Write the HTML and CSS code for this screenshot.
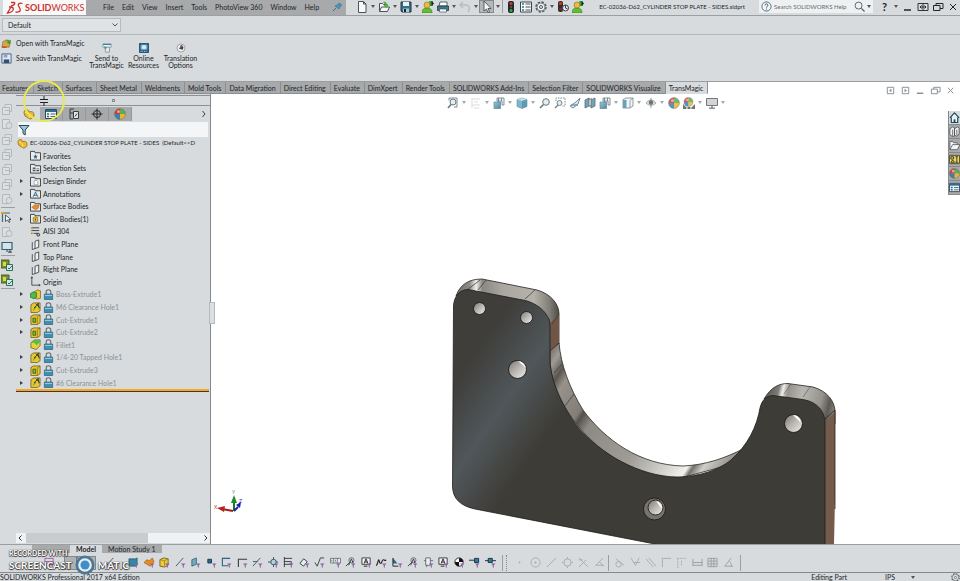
FILE: index.html
```html
<!DOCTYPE html>
<html lang="en">
<head>
<meta charset="utf-8">
<title>SOLIDWORKS</title>
<link rel="stylesheet" href="styles.css">
</head>
<body>
<svg class="defs" aria-hidden="true">
  <defs>
    <linearGradient id="g-blue" x1="0" y1="0" x2="1" y2="1"><stop offset="0" stop-color="#8cc3da"/><stop offset="1" stop-color="#2f6f8f"/></linearGradient>
    <symbol id="caret" viewBox="0 0 4 3"><path d="M0 0h4L2 3z" fill="#555"/></symbol>
    <symbol id="pin" viewBox="0 0 12 12"><path d="M2 10l3-3" stroke="#3d6f8f"/><path d="M4 5l4 3 1-2 2-2-3-2-2 2z" fill="#4a93bd" stroke="#2f6685" stroke-width=".5"/></symbol>
    <symbol id="new" viewBox="0 0 12 12"><path d="M2.5.5h5l2.500 2.500v8.500h-7.500zM7.500.5v2.500h2.500" fill="#f6f8f9" stroke="#4b5154"/></symbol>
    <symbol id="open" viewBox="0 0 12 12"><path d="M1.500 10.500v-8h3l1 1h4M1.500 10.500l2-4.500h8l-2 4.500z" fill="#f4f6f7" stroke="#4b5154"/><path d="M5 1c3-1 4 1 4 3h1.500L8 7 5.500 4H7c0-1-1-2-2-3z" fill="#4fae36"/></symbol>
    <symbol id="save" viewBox="0 0 12 12"><path d="M1 1h10v10H2l-1-1z" fill="#33718f" stroke="#24343d"/><path d="M3 1h6v4H3z" fill="#e8f1f5"/><path d="M3 7.500h6V11H3z" fill="#b6c4cb"/><path d="M4 8h2v3H4z" fill="#222"/></symbol>
    <symbol id="person" viewBox="0 0 12 12"><path d="M0 12c0-4 2-5 5-5s5 1 5 5z" fill="#5fbf2f" stroke="#377a1d" stroke-width=".6"/><circle cx="5" cy="4" r="3" fill="#f0b83d" stroke="#8a6a25" stroke-width=".6"/><path d="M7 0h4v5H8z" fill="#3aa134"/><path d="M9.500 0L12 2.500 9.500 5z" fill="#17202a"/></symbol>
    <symbol id="print" viewBox="0 0 12 12"><path d="M3 1h7v4H2z" fill="#fff" stroke="#36454e" stroke-width=".8"/><path d="M.5 5h11v4.500H.5z" fill="#39788f" stroke="#22353f" stroke-width=".8"/><path d="M2.500 8h7v3h-7z" fill="#f5f7f8" stroke="#36454e" stroke-width=".6"/></symbol>
    <symbol id="undo" viewBox="0 0 12 12"><path d="M4 1L1 4l3 3M1 4h6c4 0 4 5 2 7" fill="none" stroke="#b9bdc0" stroke-width="1.500"/></symbol>
    <symbol id="cursor" viewBox="0 0 12 12"><path d="M3 0v10l2.500-2L7 11.500l1.500-.8L7 7.500h3z" fill="#f8f8f8" stroke="#3a3d40" stroke-width=".8"/></symbol>
    <symbol id="traffic" viewBox="0 0 12 12"><rect x="3" y="0" width="6" height="12" rx="2" fill="#23282b"/><circle cx="6" cy="2.500" r="1.600" fill="#d7352a"/><circle cx="6" cy="6" r="1.200" fill="#54524a"/><circle cx="6" cy="9.500" r="1.500" fill="#3aa93f"/></symbol>
    <symbol id="list" viewBox="0 0 12 12"><path d="M.5 1h11v10H.5z" fill="#f7f9fa" stroke="#3c474d"/><path d="M2 3h2M2 6h2M2 9h2" stroke="#2f7090" stroke-width="1.500"/><path d="M5.500 3h5M5.500 6h5M5.500 9h5" stroke="#4a5155"/></symbol>
    <symbol id="gear" viewBox="0 0 12 12"><circle cx="6" cy="6" r="5" fill="none" stroke="#50575b" stroke-width="1.400" stroke-dasharray="2.400 1.500"/><circle cx="6" cy="6" r="4" fill="#eef0f1" stroke="#50575b" stroke-width=".7"/><circle cx="6" cy="6" r="1.500" fill="none" stroke="#50575b"/></symbol>
    <symbol id="traffic2" viewBox="0 0 12 12"><rect x="1" y="0" width="5" height="11" rx="2" fill="#332a2a"/><circle cx="3.500" cy="2.500" r="1.600" fill="#d7352a"/><circle cx="3.500" cy="8" r="1.300" fill="#842f2b"/><circle cx="8.500" cy="7" r="3" fill="#e5e8ea" stroke="#3c4347"/><path d="M8.500 4v3l2 1" stroke="#3c4347" fill="none"/></symbol>
    <symbol id="zoom" viewBox="0 0 12 12"><circle cx="7" cy="5" r="3.300" fill="#e1ebf0" stroke="#50626b"/><path d="M4.500 7.500L1 11" stroke="#50626b" stroke-width="1.600"/></symbol>
    <symbol id="zoomfit" viewBox="0 0 12 12"><path d="M2 3.500V1h8v9H7" fill="none" stroke="#687780"/><circle cx="6" cy="5" r="3" fill="#dfe9ee" stroke="#50626b"/><path d="M4 7.500L1 11" stroke="#50626b" stroke-width="1.600"/></symbol>
    <symbol id="zoomarea" viewBox="0 0 12 12"><path d="M2 4V1h9v8H8" fill="none" stroke="#687780" stroke-dasharray="1.500 1"/><circle cx="5.500" cy="6" r="2.500" fill="#dfe9ee" stroke="#61727b"/><path d="M4 8L1 11" stroke="#61727b" stroke-width="1.500"/></symbol>
    <symbol id="faint" viewBox="0 0 12 12"><path d="M2 1v10M2 2h8M4 5h4M2 8h8M4 11h5" stroke="#d3d6d8" fill="none"/></symbol>
    <symbol id="views" viewBox="0 0 12 12"><path d="M4 1h7v7H9V4H4z" fill="#eaf0f3" stroke="#51646e" stroke-width=".8"/><path d="M1 5h6.500v6.500H1z" fill="url(#g-blue)" stroke="#3d5f6f" stroke-width=".6"/><path d="M5.500 1v4M8.500 1v3" stroke="#51646e" stroke-width=".8"/></symbol>
    <symbol id="cube" viewBox="0 0 12 12"><path d="M6 1l5 1.500v7L6 11.500l-5-2v-7z" fill="#6ba8c2" stroke="#4c7789" stroke-width=".6"/><path d="M1 2.500L6 4l5-1.500L6 1z" fill="#b7dbe8"/><path d="M6 4v7.500l5-2v-7z" fill="#4588a5"/></symbol>
    <symbol id="section" viewBox="0 0 12 12"><path d="M1 3l4-2v8l-4 2zM7 3l4-2v8l-4 2z" fill="#5d93aa" stroke="#41525b" stroke-width=".8"/><path d="M5 2h3M5 9h2" stroke="#41525b"/></symbol>
    <symbol id="wand" viewBox="0 0 12 12"><path d="M1 9l6-4 4-4-2 6-5 4z" fill="#dce7ec" stroke="#546a75" stroke-width=".9"/><path d="M2 8h7" stroke="#4b8baa" stroke-width="1.500"/></symbol>
    <symbol id="hide" viewBox="0 0 12 12"><path d="M1 2.500L4 1h7v8l-3 2H1z" fill="#eef4f6" stroke="#5a717c" stroke-width=".8"/><path d="M1 3h3.500v8H1z" fill="#4f91ad"/><path d="M8 3.500V11M8 3.500L11 1" stroke="#5a717c" stroke-width=".7"/></symbol>
    <symbol id="eye" viewBox="0 0 12 12"><path d="M1 6c3-4 7-4 10 0-3 3-7 3-10 0z" fill="#d8dcdf" stroke="#777d80" stroke-width=".7"/><circle cx="6" cy="5.500" r="2.200" fill="#4f5558"/><path d="M6 1v10" stroke="#656b6f" stroke-width=".8"/></symbol>
    <symbol id="ball" viewBox="0 0 12 12"><path d="M6 6V.5A5.500 5.500 0 0 1 11.500 6z" fill="#58b14c"/><path d="M6 6h5.500A5.500 5.500 0 0 1 6 11.500z" fill="#e8b72b"/><path d="M6 6v5.500A5.500 5.500 0 0 1 .5 6z" fill="#3d7fb4"/><path d="M6 6H.5A5.500 5.500 0 0 1 6 .5z" fill="#cf3c34"/><circle cx="6" cy="6" r="5.400" fill="none" stroke="#666" stroke-width=".5"/><circle cx="4.500" cy="3.500" r="1.500" fill="#fff" opacity=".5"/></symbol>
    <symbol id="scene" viewBox="0 0 12 12"><use href="#ball" width="11" height="10"/><path d="M0 12V7l3 3h6l3-3v5z" fill="#555b58"/><path d="M3 11h2M7 11h2" stroke="#fff"/></symbol>
    <symbol id="monitor" viewBox="0 0 12 12"><path d="M.5 1.500h11v7H.5z" fill="#c9ced1" stroke="#5a6064"/><path d="M6 8.500V11M3 11.200h6" stroke="#5a6064" stroke-width="1.200"/></symbol>
    <symbol id="min" viewBox="0 0 12 12"><path d="M2 9h7" stroke="currentColor" stroke-width="1.500"/></symbol>
    <symbol id="max" viewBox="0 0 12 12"><path d="M1 2.500h10v7H1zM6 2v8M3 6h6M4.500 4.500L3 6l1.500 1.500M7.500 4.500L9 6 7.500 7.500" fill="none" stroke="currentColor" stroke-width=".9"/></symbol>
    <symbol id="restore" viewBox="0 0 12 12"><path d="M4 4.500v-2h7v5H8M1.500 4.500H8v5H1.500z" fill="none" stroke="currentColor"/></symbol>
    <symbol id="close" viewBox="0 0 12 12"><path d="M3 3l6 6M9 3L3 9" stroke="currentColor"/></symbol>
    <symbol id="paneL" viewBox="0 0 12 12"><path d="M2.500 2.500h7v7h-7z" fill="none" stroke="currentColor"/><path d="M7 4v4L4.500 6z" fill="currentColor"/></symbol>
    <symbol id="paneR" viewBox="0 0 12 12"><path d="M2.500 2.500h7v7h-7z" fill="none" stroke="currentColor"/><path d="M5 4v4l2.500-2z" fill="currentColor"/></symbol>
    <symbol id="part" viewBox="0 0 12 12"><path d="M1 5c0-3 2-4 4-3l1 2c3-1 5 0 5 3 0 2-2 4-4 4L2 8z" fill="#eeb92c" stroke="#8d6716" stroke-width=".8"/><path d="M2 4l3 2M6 6v4" stroke="#fbe48d"/></symbol>
    <symbol id="prop" viewBox="0 0 12 12"><path d="M.5 1.500h11v9H.5z" fill="#eef3f6" stroke="#2a4b5c"/><path d="M1 3h10" stroke="#2d6f93" stroke-width="2"/><path d="M2 6h2M2 8.500h2" stroke="#2d6f93" stroke-width="1.500"/><path d="M5.500 6h5M5.500 8.500h5" stroke="#56646b"/></symbol>
    <symbol id="config" viewBox="0 0 12 12"><path d="M2 1h4M2 1v10h3M2 5h3" fill="none" stroke="#373d40"/><path d="M5.500 3.500h5v7h-5z" fill="#e5e8ea" stroke="#373d40"/><path d="M7 8.500l2-3" stroke="#373d40"/></symbol>
    <symbol id="target" viewBox="0 0 12 12"><circle cx="6" cy="6" r="3.500" fill="none" stroke="#24282a"/><path d="M6 .5v11M.5 6h11" stroke="#24282a"/></symbol>
    <symbol id="funnel" viewBox="0 0 12 12"><path d="M1 1.500h10L7.200 6v5L5 9.500V6z" fill="#9cc5d6" stroke="#294a59"/></symbol>
    <symbol id="folder" viewBox="0 0 12 12"><path d="M.5 2V11h11V3H5.500L5 1.500H.5z" fill="#e9ecee" stroke="#34393c"/></symbol>
    <symbol id="f-star" viewBox="0 0 12 12"><use href="#folder"/><path d="M6 4.500l.8 1.700 1.700.2-1.300 1.300.4 1.800L6 8.600l-1.600.9.4-1.800-1.300-1.300 1.700-.2z" fill="#2f6782"/></symbol>
    <symbol id="f-sel" viewBox="0 0 12 12"><use href="#folder"/><path d="M3 5h3v4H3zM7 6h3v3H7z" fill="#4a5053"/><path d="M3 7h7" stroke="#ddd"/></symbol>
    <symbol id="f-bind" viewBox="0 0 12 12"><use href="#folder"/><path d="M4.500 5h3l1 1v3.500h-4z" fill="#fff" stroke="#777" stroke-width=".6"/></symbol>
    <symbol id="f-ann" viewBox="0 0 12 12"><use href="#folder"/><path d="M3.500 9.500L6 4.500l2.500 5M4.500 8h3" fill="none" stroke="#23617d"/></symbol>
    <symbol id="f-surf" viewBox="0 0 12 12"><use href="#folder"/><path d="M2 7l3-3 2 1 3-1-1 4-3 1.500z" fill="#ec8a24" stroke="#96540f" stroke-width=".5"/></symbol>
    <symbol id="f-solid" viewBox="0 0 12 12"><use href="#folder"/><path d="M3.500 5l2.500-1 2.500 1v4L6 10 3.500 9z" fill="#e5bd2b" stroke="#675214" stroke-width=".6"/><path d="M6 6v2" stroke="#5c4a10"/></symbol>
    <symbol id="mat" viewBox="0 0 12 12"><path d="M1 2h9M1 5h9M4 8h5" stroke="#34393c" fill="none"/><path d="M1 2l2-1M1 5l2-1" stroke="#d5aa22"/><circle cx="9" cy="9.500" r="1.500" fill="#cfd4d6" stroke="#222"/><path d="M1 8h2" stroke="#a88119" stroke-width="1.500"/></symbol>
    <symbol id="plane" viewBox="0 0 12 12"><path d="M2.500 3.500v8l7-2.500V1l-4 1.500v8" fill="#edf0f1" stroke="#34393c" stroke-width=".9"/></symbol>
    <symbol id="origin" viewBox="0 0 12 12"><path d="M2 1v9h9M1 2.500L2 .8l1 1.700M9.500 9l1.700 1-1.700 1" fill="none" stroke="#34393c" stroke-width=".9"/></symbol>
    <symbol id="boss" viewBox="0 0 12 12"><path d="M5 3l3-2 3.500 1v8L8 11 5 10z" fill="#ecc633" stroke="#6b5510" stroke-width=".7"/><path d="M.5 5L4 3l3 1v5l-3 1.500L.5 9z" fill="#48bd48" stroke="#205f20" stroke-width=".7"/></symbol>
    <symbol id="cut" viewBox="0 0 12 12"><path d="M1 2.500L4 1h7v8.500L8 11.500H1z" fill="#e9c530" stroke="#6b5510" stroke-width=".8"/><path d="M8 3v8.500M8 3l3-2" stroke="#6b5510" stroke-width=".6"/><path d="M3.200 4.500h3v4.500h-3z" fill="#6bbf43" stroke="#3a4a12" stroke-width=".8"/></symbol>
    <symbol id="hole" viewBox="0 0 12 12"><path d="M1 3l3-2h7v8.500L8 11.500H1z" fill="#e9c530" stroke="#6b5510" stroke-width=".8"/><path d="M3 10l2-5 2 1z" fill="#4da336"/><path d="M4.500 6.500l5-5M6.500 2l4 4M8.500 1l1.500 6" stroke="#33383b"/></symbol>
    <symbol id="fillet" viewBox="0 0 12 12"><path d="M1 4l4-3h6v6L7 11.500 1 9.500z" fill="#ecd13c" stroke="#6b5510" stroke-width=".8"/><path d="M1 4c3 0 5 0 6 3l4-4c0-2-2-2-6-2z" fill="#51c04a"/></symbol>
    <symbol id="lock" viewBox="0 0 12 12"><path d="M3.500 6V3c0-3 5-3 5 0v3" fill="none" stroke="#646a6e" stroke-width="1.200"/><path d="M1.500 5.500h9v6h-9z" fill="#3f8fb2" stroke="#1f566f" stroke-width=".7"/><path d="M2 7h8" stroke="#a7d4e5"/></symbol>
    <symbol id="ghost" viewBox="0 0 12 12"><path d="M1.500 4.500h7v7h-7zM4 4V1.500h6.500v7H9M4 7.500h4" fill="#dde0e2" stroke="#b3b8bb"/></symbol>
    <symbol id="ghost2" viewBox="0 0 12 12"><path d="M1.500 1.500h7v9h-7z" fill="#dde0e2" stroke="#b3b8bb"/><circle cx="8" cy="7.500" r="3" fill="#d9dcde" stroke="#b3b8bb"/></symbol>
    <symbol id="sketch" viewBox="0 0 12 12"><path d="M1.500 11V2H9" fill="none" stroke="#386b82" stroke-width="1.200"/><path d="M0 2h4" stroke="#dd9f2b" stroke-width="2"/><path d="M4.500 4v6.500l2-1.500 1.500 2.500 1-.6-1.200-2.400H10z" fill="#f2f4f5" stroke="#384146" stroke-width=".8"/></symbol>
    <symbol id="screen" viewBox="0 0 12 12"><path d="M1 1.500h10v7H1z" fill="#d3e4eb" stroke="#2f6276" stroke-width="1.200"/><path d="M6 9v2M7 11h4M9 9v3" stroke="#384146"/></symbol>
    <symbol id="greenbox" viewBox="0 0 12 12"><path d="M0 1h8v8H0z" fill="#5d9b38" stroke="#6a5315"/><path d="M2 3h3v4H2z" fill="#ead04a"/><path d="M5.500 5.500h6v6h-6z" fill="#d8e4e0" stroke="#26735f"/><path d="M7 9l1 1 3-3" stroke="#26735f" fill="none"/></symbol>
    <symbol id="openTM" viewBox="0 0 12 12"><path d="M1 10l1-6 4-2 4 2-1 6z" fill="#d8a83f" stroke="#7a5a1c" stroke-width=".6"/><path d="M5 4c2-3 4-2 4-1l2-1-1 5-4-2 2-1c-1-1-2-1-3 0z" fill="#3d9b3c"/><path d="M1 10h5" stroke="#c8432f" stroke-width="1.500"/></symbol>
    <symbol id="saveTM" viewBox="0 0 12 12"><path d="M1 1h10v10H1z" fill="#e5ebf2" stroke="#405b86"/><path d="M3 1h4v4H3z" fill="#8ba3c4"/><path d="M3 7h6v4H3z" fill="#344d75"/></symbol>
    <symbol id="send" viewBox="0 0 12 12"><path d="M1 2h10v3H1z" fill="#fff" stroke="#4773a8" stroke-width=".7"/><path d="M1 1.500h10" stroke="#3e70b2" stroke-width="1.500"/><path d="M4 5h5v6H4z" fill="#e4e9ed" stroke="#657078" stroke-width=".7"/><path d="M2 4l4 1-2 3z" fill="#48a43b"/></symbol>
    <symbol id="online" viewBox="0 0 12 12"><path d="M.5.5h11v11H.5z" fill="#28608c" stroke="#1e415f"/><path d="M2 2h8v6H2z" fill="#7fb6d5"/><circle cx="6" cy="5" r="2.500" fill="#d9edf5"/><path d="M2 10h8" stroke="#d9edf5" stroke-dasharray="1 1"/></symbol>
    <symbol id="trans" viewBox="0 0 12 12"><circle cx="6" cy="6" r="4.800" fill="#eef0f2" stroke="#7e8588" stroke-width=".8"/><path d="M6 2l3 3-1 3-4-1z" fill="#374047"/><path d="M4 7l4-4" stroke="#bc5260"/></symbol>
    <symbol id="home" viewBox="0 0 12 12"><path d="M1 6.500L6 1l5 5.500M2.500 6v5.500h7V6" fill="#f0f4f5" stroke="#1d4a5b" stroke-width="1.300"/><path d="M5 8h2v3.500H5z" fill="#1d4a5b"/></symbol>
    <symbol id="books" viewBox="0 0 12 12"><path d="M1 3l3-2 2 1v9l-2 .5-3-2zM6 3l3-2 2 1v7l-3 2-2-1zM4 4v7M8.500 4v6" fill="#eef0f1" stroke="#44494c" stroke-width=".8"/></symbol>
    <symbol id="folderO" viewBox="0 0 12 12"><path d="M1 10.500v-9h3l1 1.500h4v2M1 10.500L4 5h8l-3 5.500z" fill="#f4f5f6" stroke="#555b5e" stroke-width=".9"/></symbol>
    <symbol id="palette" viewBox="0 0 12 12"><path d="M.5 1.500h11v9H.5z" fill="#f1d75a" stroke="#4c4a30"/><path d="M2 3h3v2.500H2zM2 9l2-2.500L6 9zM7 3h3M8.500 3v6M7 9h3" stroke="#2b3633" fill="none"/></symbol>
    <!-- selection-filter glyphs -->
    <symbol id="tag" viewBox="0 0 12 12"><path d="M6.500 7h5L9.600 9v3l-1.200-1V9z" fill="#8f5fae"/></symbol>
    <symbol id="q1" viewBox="0 0 12 12"><path d="M1 2h7l2-1v8l-2 1H1z" fill="#3687a6" stroke="#1d4f63" stroke-width=".7"/><use href="#tag"/></symbol>
    <symbol id="q2" viewBox="0 0 12 12"><path d="M0 6l3-3 3 1 3-3 2 4-4 5-4-2z" fill="#ea8d1f" stroke="#8a4d0c" stroke-width=".6"/><use href="#tag"/></symbol>
    <symbol id="q3" viewBox="0 0 12 12"><path d="M1 3l4-2 5 1v7l-4 2-5-1z" fill="#edc93b" stroke="#5c4a10" stroke-width=".8"/><path d="M1 3l5 1 4-2M6 4v6" fill="none" stroke="#8c7320" stroke-width=".7"/><use href="#tag"/></symbol>
    <symbol id="q4" viewBox="0 0 12 12"><path d="M1 10L9 1" stroke="#3c5661"/><use href="#tag"/></symbol>
    <symbol id="q5" viewBox="0 0 12 12"><path d="M2 3l5-2v7l-5 2z" fill="#73a9bf" stroke="#31586a" stroke-width=".8"/><use href="#tag"/></symbol>
    <symbol id="q6" viewBox="0 0 12 12"><path d="M2 2.500h4v4H2z" fill="#246e8c" stroke="#17343f"/><use href="#tag"/></symbol>
    <symbol id="q7" viewBox="0 0 12 12"><path d="M10 1.500H1.500v8H8" fill="none" stroke="#276680" stroke-width="1.200"/><use href="#tag"/></symbol>
    <symbol id="q8" viewBox="0 0 12 12"><path d="M1.500 10V2.500H10M1 2.500h2M8 2.500h3M1.500 9v2" fill="none" stroke="#333c40" stroke-width="1.200"/><use href="#tag"/></symbol>
    <symbol id="q9" viewBox="0 0 12 12"><path d="M1 10L9 1M1 5h5" stroke="#3c5661"/><use href="#tag"/></symbol>
    <symbol id="q10" viewBox="0 0 12 12"><path d="M6 0v11M0 5.500h11" stroke="#2e5262"/><circle cx="6" cy="5.500" r="3" fill="#b8d0da" stroke="#2e5262"/><use href="#tag"/></symbol>
    <symbol id="q11" viewBox="0 0 12 12"><path d="M1.500 0v11M1 1.500h9M1 5h8v3H1" fill="none" stroke="#343a3d"/><use href="#tag"/></symbol>
    <symbol id="q12" viewBox="0 0 12 12"><path d="M1 7l4-5 4 3-4 5z" fill="#e5ebee" stroke="#343a3d"/><use href="#tag"/></symbol>
    <symbol id="q13" viewBox="0 0 12 12"><path d="M1 6l2.500 4L7 1h4" fill="none" stroke="#343a3d"/><use href="#tag"/></symbol>
    <symbol id="q14" viewBox="0 0 12 12"><path d="M.5 1.500h11v5H.5zM4 1.500v5M8 1.500v5M2 3v2M6 3v2" fill="#eceeef" stroke="#555b5e" stroke-width=".8"/><use href="#tag"/></symbol>
    <symbol id="q15" viewBox="0 0 12 12"><circle cx="7" cy="3.500" r="2.800" fill="none" stroke="#50565a" stroke-width=".8"/><path d="M1 10l4-4M4 9l3-7 2 5" stroke="#343a3d" fill="none"/><use href="#tag"/></symbol>
    <symbol id="q16" viewBox="0 0 12 12"><path d="M1 1h9v7H1z" fill="#f1f2f3" stroke="#343a3d"/><path d="M3.500 7L5.500 2l2 5M4 5.500h3M3 10h4" fill="none" stroke="#222"/><use href="#tag"/></symbol>
    <symbol id="q17" viewBox="0 0 12 12"><path d="M0 9c2 0 2-6 3-6s0 4 2 4 1-4 3-4 1 2 3 0" fill="none" stroke="#222" stroke-width="1.200"/><use href="#tag"/></symbol>
    <symbol id="q18" viewBox="0 0 12 12"><path d="M1 1l5 6H1z" fill="#246e8c"/><path d="M1 1v9h6" stroke="#222" fill="none"/><use href="#tag"/></symbol>
    <symbol id="q19" viewBox="0 0 12 12"><path d="M3 1h5v8H3zM1 4h2M8 4h3M4 9v2" fill="#edeff0" stroke="#484e51" stroke-width=".8"/><use href="#tag"/></symbol>
    <symbol id="q20" viewBox="0 0 12 12"><circle cx="5.500" cy="5.500" r="4.500" fill="#fff" stroke="#222"/><path d="M5.500 5.500V1A4.500 4.500 0 0 1 10 5.500zM5.500 5.500V10A4.500 4.500 0 0 1 1 5.500z" fill="#111"/><use href="#tag"/></symbol>
    <symbol id="q21" viewBox="0 0 12 12"><path d="M0 3.500h7" stroke="#222"/><path d="M6 1.500h4.500v4.500H6z" fill="#2c7f9c" stroke="#153642"/><use href="#tag"/></symbol>
    <symbol id="q22" viewBox="0 0 12 12"><path d="M0 4h12" stroke="#222"/><path d="M3.500 1.500H8v4.500H3.500z" fill="#2c7f9c" stroke="#153642"/><use href="#tag"/></symbol>
    <symbol id="q23" viewBox="0 0 12 12"><path d="M1 1.500h9v7H1zM1 5h9" fill="none" stroke="#a05aa8"/><use href="#tag"/></symbol>
    <symbol id="d1" viewBox="0 0 12 12"><circle cx="6" cy="6" r="1" fill="#aaafb2"/></symbol>
    <symbol id="d2" viewBox="0 0 12 12"><circle cx="6" cy="6" r="5" fill="none" stroke="#a6abae"/><circle cx="6" cy="6" r="1.200" fill="#a6abae"/></symbol>
    <symbol id="d3" viewBox="0 0 12 12"><path d="M1 11L11 1" stroke="#a6abae"/></symbol>
    <symbol id="d4" viewBox="0 0 12 12"><circle cx="6" cy="6" r="4" fill="none" stroke="#a6abae"/><path d="M6 0v2M6 10v2M0 6h2M10 6h2" stroke="#a6abae"/></symbol>
    <symbol id="d5" viewBox="0 0 12 12"><path d="M1 1l10 10M9 3l-8 8M1 3h4" stroke="#a6abae"/></symbol>
    <symbol id="d6" viewBox="0 0 12 12"><path d="M10 1L2 9h9M6 5l4 5" fill="none" stroke="#a6abae"/></symbol>
    <symbol id="d7" viewBox="0 0 12 12"><circle cx="5" cy="8" r="3" fill="none" stroke="#a6abae"/><path d="M2 2l9 7" stroke="#a6abae"/></symbol>
    <symbol id="d8" viewBox="0 0 12 12"><path d="M1 1l5 8 4-8M4 6h7" fill="none" stroke="#a6abae"/></symbol>
    <symbol id="d9" viewBox="0 0 12 12"><path d="M1 2l8 9M4 1l8 9" stroke="#a6abae"/></symbol>
    <symbol id="d10" viewBox="0 0 12 12"><path d="M1.500 11V1.500H11" fill="none" stroke="#a6abae"/></symbol>
    <symbol id="d11" viewBox="0 0 12 12"><path d="M2 12V1.500M1 1.500h10M6 4v5" fill="none" stroke="#a6abae" stroke-dasharray="2 1"/></symbol>
    <symbol id="d12" viewBox="0 0 12 12"><path d="M1 2v8M11 2v8M1 6h10M1 9h10" stroke="#999ea1"/></symbol>
    <symbol id="d13" viewBox="0 0 12 12"><path d="M1 1.500h10v9H1zM1 4.500h10M1 7.500h10M4.500 1v10M7.500 1v10" fill="none" stroke="#999ea1"/></symbol>
    <symbol id="d14" viewBox="0 0 12 12"><path d="M9 1L2 10h9M7 5c2 1 2 3 2 5" fill="none" stroke="#999ea1"/></symbol>
  </defs>
</svg>

<header class="titlebar">
  <div class="logo">
    <svg class="ds" viewBox="0 0 18 14" aria-hidden="true"><path d="M5 1.500l3 0C10 2 8 4.500 5 5M3 6c6-1 6 5-1.500 6L5 6M16.500 2.500c-3-1-5 .5-4 2.500l1.500 2.500c1 3-1 4-4.500 3.500" fill="none" stroke="#c9302c" stroke-width="1.300"/></svg>
    <span class="brand"><b>SOLID</b>WORKS</span>
  </div>
  <nav class="menu">
    <a href="#">File</a><a href="#">Edit</a><a href="#">View</a><a href="#">Insert</a><a href="#">Tools</a><a href="#">PhotoView 360</a><a href="#">Window</a><a href="#">Help</a>
    <button class="pin" aria-label="Pin"><svg><use href="#pin"/></svg></button>
  </nav>
  <div class="tools quick">
    <button aria-label="New"><svg><use href="#new"/></svg></button><button class="dd" aria-label="New options"><svg><use href="#caret"/></svg></button>
    <button aria-label="Open"><svg><use href="#open"/></svg></button><button class="dd" aria-label="Open options"><svg><use href="#caret"/></svg></button>
    <button aria-label="Save"><svg><use href="#save"/></svg></button><button class="dd" aria-label="Save options"><svg><use href="#caret"/></svg></button>
    <button aria-label="Share"><svg><use href="#person"/></svg></button>
    <button aria-label="Print"><svg><use href="#print"/></svg></button><button class="dd" aria-label="Print options"><svg><use href="#caret"/></svg></button>
    <button aria-label="Undo"><svg><use href="#undo"/></svg></button><button class="dd" aria-label="Undo options"><svg><use href="#caret"/></svg></button>
    <button class="pressed" aria-label="Select"><svg><use href="#cursor"/></svg></button><button class="dd divided" aria-label="Select options"><svg><use href="#caret"/></svg></button>
    <button aria-label="Rebuild"><svg><use href="#traffic"/></svg></button>
    <button aria-label="Properties"><svg><use href="#list"/></svg></button>
    <button aria-label="Options"><svg><use href="#gear"/></svg></button><button class="dd" aria-label="More options"><svg><use href="#caret"/></svg></button>
    <button aria-label="Status"><svg><use href="#traffic2"/></svg></button>
    <button aria-label="Account"><svg><use href="#person"/></svg></button>
  </div>
  <h1 class="doc-title">EC-02036-D62_CYLINDER STOP PLATE - SIDES.sldprt</h1>
  <label class="search">
    <svg class="q" viewBox="0 0 12 12" aria-hidden="true"><circle cx="6" cy="6" r="5" fill="#f3f6f8" stroke="#42697b"/><path d="M4.500 4.800c0-2.200 3-2.200 3 0C7.500 6 6 6 6 7.200M6 8.300v1" fill="none" stroke="#29485a"/></svg>
    <input type="text" placeholder="Search SOLIDWORKS Help" aria-label="Search SOLIDWORKS Help">
    <svg class="q" viewBox="0 0 12 12" aria-hidden="true"><circle cx="5" cy="5" r="3.800" fill="none" stroke="#555b5f"/><path d="M8 8l3.500 3.500" stroke="#555b5f" stroke-width="1.300"/></svg>
    <svg class="c"><use href="#caret"/></svg>
  </label>
  <div class="tools window">
    <button class="help">?</button><button class="dd" aria-label="Help options"><svg><use href="#caret"/></svg></button>
    <button aria-label="Minimize"><svg><use href="#min"/></svg></button>
    <button aria-label="Span"><svg><use href="#max"/></svg></button>
    <button aria-label="Restore"><svg><use href="#restore"/></svg></button>
    <button aria-label="Close"><svg><use href="#close"/></svg></button>
  </div>
</header>

<div class="config-row">
  <select aria-label="Configuration"><option>Default</option></select>
  <svg class="chev" viewBox="0 0 6 4" aria-hidden="true"><path d="M.5.5L3 3 5.500.5" fill="none" stroke="#555"/></svg>
</div>

<div class="ribbon">
  <div class="stack">
    <button><svg><use href="#openTM"/></svg>Open with TransMagic</button>
    <button><svg><use href="#saveTM"/></svg>Save with TransMagic</button>
  </div>
  <button class="big"><svg><use href="#send"/></svg>Send to<br>TransMagic</button>
  <button class="big"><svg><use href="#online"/></svg>Online<br>Resources</button>
  <button class="big"><svg><use href="#trans"/></svg>Translation<br>Options</button>
</div>

<nav class="tabs">
  <a href="#">Features</a><a href="#">Sketch</a><a href="#">Surfaces</a><a href="#">Sheet Metal</a><a href="#">Weldments</a><a href="#">Mold Tools</a><a href="#">Data Migration</a><a href="#">Direct Editing</a><a href="#">Evaluate</a><a href="#">DimXpert</a><a href="#">Render Tools</a><a href="#">SOLIDWORKS Add-Ins</a><a href="#">Selection Filter</a><a href="#">SOLIDWORKS Visualize</a><a href="#" class="on">TransMagic</a>
</nav>

<main class="work">
  <div class="rail">
    <button aria-label="Tool 1"><svg><use href="#ghost"/></svg></button>
    <button aria-label="Tool 2"><svg><use href="#ghost2"/></svg></button>
    <button aria-label="Tool 3"><svg><use href="#ghost"/></svg></button>
    <button aria-label="Tool 4"><svg><use href="#ghost"/></svg></button>
    <button aria-label="Tool 5"><svg><use href="#ghost"/></svg></button>
    <button aria-label="Tool 6"><svg><use href="#ghost"/></svg></button>
    <button aria-label="Tool 7"><svg><use href="#ghost2"/></svg></button>
    <hr>
    <button aria-label="Sketch"><svg><use href="#sketch"/></svg></button>
    <button aria-label="Repair"><svg><use href="#ghost2"/></svg></button>
    <button aria-label="Display"><svg><use href="#screen"/></svg></button>
    <hr>
    <button aria-label="Check body"><svg><use href="#greenbox"/></svg></button>
    <button aria-label="Check part"><svg><use href="#greenbox"/></svg></button>
    <hr>
  </div>

  <aside class="panel">
    <div class="grab"><i></i></div>
    <div class="panel-tabs">
      <button class="on" aria-label="Feature tree"><svg><use href="#part"/></svg></button>
      <button aria-label="Properties"><svg><use href="#prop"/></svg></button>
      <button aria-label="Configurations"><svg><use href="#config"/></svg></button>
      <button aria-label="Dimensions"><svg><use href="#target"/></svg></button>
      <button aria-label="Appearances"><svg><use href="#ball"/></svg></button>
      <button class="more" aria-label="More tabs"><svg viewBox="0 0 4 8"><path d="M.5 1L3 4 .5 7" fill="none" stroke="#444"/></svg></button>
    </div>
    <label class="filter"><svg><use href="#funnel"/></svg><input type="text" aria-label="Filter"></label>
    <ul class="tree">
      <li class="root"><svg><use href="#part"/></svg>EC-02036-D62_CYLINDER STOP PLATE - SIDES&nbsp; (Default&lt;&lt;D</li>
      <li><svg><use href="#f-star"/></svg>Favorites</li>
      <li><svg><use href="#f-sel"/></svg>Selection Sets</li>
      <li class="has"><svg><use href="#f-bind"/></svg>Design Binder</li>
      <li class="has"><svg><use href="#f-ann"/></svg>Annotations</li>
      <li><svg><use href="#f-surf"/></svg>Surface Bodies</li>
      <li class="has"><svg><use href="#f-solid"/></svg>Solid Bodies(1)</li>
      <li><svg><use href="#mat"/></svg>AISI 304</li>
      <li><svg><use href="#plane"/></svg>Front Plane</li>
      <li><svg><use href="#plane"/></svg>Top Plane</li>
      <li><svg><use href="#plane"/></svg>Right Plane</li>
      <li><svg><use href="#origin"/></svg>Origin</li>
      <li class="has dim"><svg><use href="#boss"/></svg><svg><use href="#lock"/></svg>Boss-Extrude1</li>
      <li class="has dim"><svg><use href="#hole"/></svg><svg><use href="#lock"/></svg>M6 Clearance Hole1</li>
      <li class="has dim"><svg><use href="#cut"/></svg><svg><use href="#lock"/></svg>Cut-Extrude1</li>
      <li class="has dim"><svg><use href="#cut"/></svg><svg><use href="#lock"/></svg>Cut-Extrude2</li>
      <li class="dim"><svg><use href="#fillet"/></svg><svg><use href="#lock"/></svg>Fillet1</li>
      <li class="has dim"><svg><use href="#hole"/></svg><svg><use href="#lock"/></svg>1/4-20 Tapped Hole1</li>
      <li class="has dim"><svg><use href="#cut"/></svg><svg><use href="#lock"/></svg>Cut-Extrude3</li>
      <li class="has dim"><svg><use href="#hole"/></svg><svg><use href="#lock"/></svg>#6 Clearance Hole1</li>
    </ul>
    <div class="rollback"></div>
    <div class="hscroll">
      <svg viewBox="0 0 4 8"><path d="M3.500 1.500L1 4l2.500 2.500" fill="none" stroke="#333"/></svg>
      <div class="track"><div class="thumb"></div></div>
      <svg viewBox="0 0 4 8"><path d="M.5 1.500L3 4 .5 6.500" fill="none" stroke="#333"/></svg>
    </div>
    <div class="splitter"></div>
  </aside>

  <section class="view">
    <svg class="model" viewBox="211 94 749 451" preserveAspectRatio="xMidYMax slice" role="img" aria-label="Cylinder stop plate">
      <defs>
        <linearGradient id="face" gradientUnits="userSpaceOnUse" x1="447" y1="395" x2="533" y2="455">
          <stop offset="0" stop-color="#3f3e3b"/><stop offset=".5" stop-color="#50575a"/><stop offset="1" stop-color="#3e3c37"/>
        </linearGradient>
        <linearGradient id="topL" gradientUnits="userSpaceOnUse" x1="455" y1="0" x2="560" y2="0">
          <stop offset="0" stop-color="#6d6a66"/><stop offset=".14" stop-color="#8f8d89"/><stop offset=".2" stop-color="#f0efec"/><stop offset=".26" stop-color="#8b8883"/><stop offset=".45" stop-color="#aaa7a1"/><stop offset=".75" stop-color="#b5b2ac"/><stop offset=".9" stop-color="#817d77"/><stop offset="1" stop-color="#494640"/>
        </linearGradient>
        <linearGradient id="arc" gradientUnits="userSpaceOnUse" x1="550" y1="340" x2="735" y2="460">
          <stop offset="0" stop-color="#5d5550"/><stop offset=".07" stop-color="#a09b95"/><stop offset=".12" stop-color="#5b554f"/><stop offset=".16" stop-color="#98928b"/><stop offset=".29" stop-color="#827d77"/><stop offset=".31" stop-color="#55504b"/><stop offset=".36" stop-color="#8d8983"/><stop offset=".6" stop-color="#9f9c96"/><stop offset=".78" stop-color="#dddcd8"/><stop offset=".84" stop-color="#f2f1ee"/><stop offset=".86" stop-color="#74716b"/><stop offset=".9" stop-color="#d0ceca"/><stop offset="1" stop-color="#8d8a84"/>
        </linearGradient>
        <linearGradient id="topR" gradientUnits="userSpaceOnUse" x1="765" y1="395" x2="835" y2="412">
          <stop offset="0" stop-color="#57544f"/><stop offset=".17" stop-color="#807d78"/><stop offset=".23" stop-color="#f1f0ed"/><stop offset=".3" stop-color="#96938e"/><stop offset=".5" stop-color="#b9b7b2"/><stop offset=".78" stop-color="#95928c"/><stop offset=".9" stop-color="#5c5853"/><stop offset="1" stop-color="#8d8780"/>
        </linearGradient>
        <linearGradient id="hl" x1="0" y1="0" x2="1" y2="1"><stop offset="0" stop-color="#77736f"/><stop offset=".45" stop-color="#b5b1ac"/><stop offset="1" stop-color="#f2f0ee"/></linearGradient>
      </defs>
      <path d="M456 297C460 286 468 280 482 280L537 291C551 295 559 305 559 315V345L549 350V320L467 294Z" fill="url(#topL)" stroke="#24221f" stroke-width=".8"/>
      <path d="M549 325L559 316V350L549 352Z" fill="#715646"/>
      <path d="M550 352L559 344C561 366 569 388 583 411C605 441 640 466 683 467C706 466 725 459 743 450L729 466L677 480C630 478 585 445 563 405C551 383 550 370 550 352Z" fill="url(#arc)" stroke="#2a2825" stroke-width=".8"/>
      <path d="M554 374l8-9M565 407l9-12M480 281l-13 10M486 281l-8 10M535 291l-10 9M552 325l6-8" stroke="#37332f" stroke-width=".7" fill="none"/>
      <path d="M764 400C771 388 779 384.500 788 384.500L813 388C827 392 835 402 835 413V425L824 424L800 402Z" fill="url(#topR)" stroke="#24221f" stroke-width=".8"/>
      <path d="M825 423L835 413V500L834 545H825Z" fill="#745b4b"/>
      <path d="M835 411V510M825 420l10-9" stroke="#24221f" stroke-width=".8"/>
      <path d="M791 385l-7 10M810 388l-7 10" stroke="#5b5853" stroke-width=".6"/>
      <path d="M453.500 307C454 297 460 290.500 468 290.500L520 300.500C538 303 549.500 315 550 326V363C551 383 563 408 577 427C600 455 640 477.500 677 478C700 478 720 470 731 461C748 446 757 427 760 409C762 401 766 397 773 396.500L803 400.500C818 403 825 413 825 424V546H660L475 510C461 507 452.500 500 452.500 487Z" fill="url(#face)" stroke="#1e1d1b" stroke-width=".8"/>
      <g stroke="#1d1b19" stroke-width=".9" fill="url(#hl)">
        <circle cx="479.500" cy="309.500" r="6"/><circle cx="526.500" cy="318.500" r="6"/><circle cx="517.500" cy="370.500" r="9"/><circle cx="793.500" cy="424.500" r="9"/>
        <circle cx="654.500" cy="510" r="11" fill="#77736d"/><circle cx="655.500" cy="508.500" r="7.500"/>
      </g>
      <path d="M518 362c4 0 7 3 8 7zM793 416c5 0 7 3 8 8zM656 502c4 1 6 4 6 8z" fill="#fff"/>
      <g class="triad">
        <path d="M233 512l-11-2" stroke="#a51d17" stroke-width="2"/><path d="M217 509l8-2-1 6z" fill="#b3241c"/>
        <path d="M234 512v-9" stroke="#1a7a24" stroke-width="2"/><path d="M234 496l3 8h-6z" fill="#1d8b2b"/>
        <path d="M234 512l4-4" stroke="#1b1ea8" stroke-width="2"/><path d="M241 503l-1 6-4-3z" fill="#1b1ea8"/>
        <text x="232" y="495" fill="#3c9b45">Y</text><text x="214" y="510" fill="#bf3a33">X</text><text x="239" y="504" fill="#2c2fc0">Z</text>
      </g>
    </svg>

    <div class="tools hud">
      <button aria-label="Zoom to fit"><svg><use href="#zoomfit"/></svg></button><button class="dd" aria-label="Zoom options"><svg><use href="#caret"/></svg></button>
      <button aria-label="Markup"><svg><use href="#faint"/></svg></button><button class="dd" aria-label="Markup options"><svg><use href="#caret"/></svg></button>
      <button aria-label="View orientation"><svg><use href="#views"/></svg></button><button class="dd" aria-label="Orientation options"><svg><use href="#caret"/></svg></button>
      <button aria-label="Shaded"><svg><use href="#cube"/></svg></button><button class="dd" aria-label="Shading options"><svg><use href="#caret"/></svg></button>
      <button aria-label="Zoom"><svg><use href="#zoom"/></svg></button>
      <button aria-label="Zoom to area"><svg><use href="#zoomarea"/></svg></button>
      <button aria-label="Previous view"><svg><use href="#wand"/></svg></button>
      <button aria-label="Section view"><svg><use href="#section"/></svg></button>
      <button aria-label="Views"><svg><use href="#views"/></svg></button><button class="dd" aria-label="Views options"><svg><use href="#caret"/></svg></button>
      <button aria-label="Display style"><svg><use href="#hide"/></svg></button><button class="dd" aria-label="Display options"><svg><use href="#caret"/></svg></button>
      <button aria-label="Hide or show"><svg><use href="#eye"/></svg></button><button class="dd" aria-label="Visibility options"><svg><use href="#caret"/></svg></button>
      <button aria-label="Appearance"><svg><use href="#ball"/></svg></button>
      <button aria-label="Scene"><svg><use href="#scene"/></svg></button><button class="dd" aria-label="Scene options"><svg><use href="#caret"/></svg></button>
      <button aria-label="View settings"><svg><use href="#monitor"/></svg></button><button class="dd" aria-label="View setting options"><svg><use href="#caret"/></svg></button>
    </div>
    <div class="tools doc-ctl">
      <button aria-label="Previous pane"><svg><use href="#paneL"/></svg></button>
      <button aria-label="Next pane"><svg><use href="#paneR"/></svg></button>
      <button aria-label="Minimize document"><svg><use href="#min"/></svg></button>
      <button aria-label="Restore document"><svg><use href="#restore"/></svg></button>
      <button aria-label="Close document"><svg><use href="#close"/></svg></button>
    </div>
    <div class="task">
      <button class="on" aria-label="Home"><svg><use href="#home"/></svg></button>
      <button aria-label="Design library"><svg><use href="#books"/></svg></button>
      <button aria-label="File explorer"><svg><use href="#folderO"/></svg></button>
      <button aria-label="View palette"><svg><use href="#palette"/></svg></button>
      <button aria-label="Appearances"><svg><use href="#ball"/></svg></button>
      <button aria-label="Custom properties"><svg><use href="#prop"/></svg></button>
    </div>
  </section>
</main>

<footer>
  <nav class="sheets"><a href="#" class="blank" aria-label="3D Views"></a><a href="#" class="on">Model</a><a href="#" class="study">Motion Study 1</a></nav>
  <div class="filters">
    <div class="group lead">
      <button aria-label="Filter 1"><svg><use href="#q23"/></svg></button>
      <button class="pressed" aria-label="Filter 2"><svg><use href="#cursor"/></svg></button>
      <button aria-label="Filter 3"><svg><use href="#q4"/></svg></button>
    </div>
    <div class="group main">
      <button aria-label="Faces"><svg><use href="#q1"/></svg></button><button aria-label="Surfaces"><svg><use href="#q2"/></svg></button><button aria-label="Solids"><svg><use href="#q3"/></svg></button><button aria-label="Axes"><svg><use href="#q4"/></svg></button><button aria-label="Planes"><svg><use href="#q5"/></svg></button><button aria-label="Points"><svg><use href="#q6"/></svg></button><button aria-label="Sketches"><svg><use href="#q7"/></svg></button><button aria-label="Segments"><svg><use href="#q8"/></svg></button><button aria-label="Midpoints"><svg><use href="#q9"/></svg></button><button aria-label="Center marks"><svg><use href="#q10"/></svg></button><button aria-label="Dimensions"><svg><use href="#q11"/></svg></button><button aria-label="Tags"><svg><use href="#q12"/></svg></button><button aria-label="Finish"><svg><use href="#q13"/></svg></button><button aria-label="Tolerances"><svg><use href="#q14"/></svg></button><button aria-label="Notes"><svg><use href="#q15"/></svg></button><button aria-label="Datums"><svg><use href="#q16"/></svg></button><button aria-label="Welds"><svg><use href="#q17"/></svg></button><button aria-label="Weld symbols"><svg><use href="#q18"/></svg></button><button aria-label="Datum targets"><svg><use href="#q15"/></svg></button><button aria-label="Cosmetic threads"><svg><use href="#q19"/></svg></button><button aria-label="Blocks"><svg><use href="#q16"/></svg></button><button aria-label="Mass"><svg><use href="#q20"/></svg></button><button aria-label="Connection points"><svg><use href="#q21"/></svg></button><button aria-label="Routing points"><svg><use href="#q22"/></svg></button>
    </div>
    <div class="group snapA">
      <button aria-label="Point snap"><svg><use href="#d1"/></svg></button><button aria-label="Center snap"><svg><use href="#d2"/></svg></button><button aria-label="Line snap"><svg><use href="#d3"/></svg></button><button aria-label="Quadrant snap"><svg><use href="#d4"/></svg></button><button aria-label="Intersection snap"><svg><use href="#d5"/></svg></button><button aria-label="Nearest snap"><svg><use href="#d6"/></svg></button>
    </div>
    <div class="group snapB">
      <button aria-label="Tangent snap"><svg><use href="#d7"/></svg></button><button aria-label="Perpendicular snap"><svg><use href="#d8"/></svg></button><button aria-label="Parallel snap"><svg><use href="#d9"/></svg></button><button aria-label="Line corner snap"><svg><use href="#d10"/></svg></button><button aria-label="Point corner snap"><svg><use href="#d11"/></svg></button><button aria-label="Length snap"><svg><use href="#d12"/></svg></button><button aria-label="Grid snap"><svg><use href="#d13"/></svg></button><button aria-label="Angle snap"><svg><use href="#d14"/></svg></button>
    </div>
  </div>
  <div class="status">
    <span class="edition">SOLIDWORKS Professional 2017 x64 Edition</span>
    <span class="mode">Editing Part</span><span class="units">IPS</span><svg class="c"><use href="#caret"/></svg><svg class="tagi"><use href="#gear"/></svg>
  </div>
</footer>

<div class="watermark">
  <span class="small">RECORDED WITH</span>
  <span class="big-mark">SCREENCAST<svg viewBox="0 0 22 22" aria-hidden="true"><circle cx="11" cy="11" r="9" fill="#e9eef2" stroke="#4c7796" stroke-width="3"/><circle cx="11" cy="11" r="5" fill="#3e8fc9"/></svg>MATIC</span>
</div>
<svg class="pointer" viewBox="0 0 44 44" aria-hidden="true"><circle cx="22" cy="22" r="20" fill="none" stroke="#e6ea4e" stroke-width="2"/><path d="M18 20.500h8M18 23.500h8M22 17v3M22 24v3" stroke="#222"/></svg>
</body>
</html>
```
FILE: styles.css
```css
* { box-sizing: border-box; }

:root {
  --bg: #d7dbde;
  --grey: #a7a9ab;
  --line: #9b9fa2;
  --ink: #222527;
}

body {
  margin: 0;
  height: 100vh;
  display: flex;
  flex-direction: column;
  overflow: hidden;
  background: var(--bg);
  color: var(--ink);
  font: 7px/8px Lato, "Open Sans", sans-serif;
}

a { color: inherit; text-decoration: none; }
button { font: inherit; color: inherit; background: none; border: 0; padding: 0; display: flex; align-items: center; justify-content: center; }
svg { display: block; flex: none; width: 12px; height: 12px; }
.defs { position: absolute; width: 0; height: 0; }

/* Title bar */
.titlebar { display: flex; align-items: stretch; height: 16px; border-bottom: 1px solid var(--line); }
.logo { display: flex; align-items: center; gap: 1px; width: 83px; margin-left: 3px; padding-left: 3px; background: #f8f8f8; color: #c9302c; }
.logo .ds { width: 18px; height: 14px; }
.brand { font-size: 9px; line-height: 14px; }
.menu { display: flex; align-items: center; gap: 8px; width: 260px; padding: 0 3px 2px 17px; background: var(--grey); white-space: nowrap; }
.pin { margin-left: auto; }
.tools { display: flex; align-items: center; }
.tools button { width: 15px; height: 13px; }
.tools .dd { width: 7px; }
.dd svg { width: 4px; height: 3px; }
.quick { padding: 0 0 2px 8px; }
.tools .pressed { background: #b3b7ba; border: 1px solid #85898c; }
.tools .divided { border-right: 1px solid var(--line); width: 9px; }
.doc-title { flex: 1; margin: 0; padding-bottom: 2px; font: inherit; font-size: 6px; line-height: 13px; text-align: center; white-space: nowrap; }
.search { display: flex; align-items: center; gap: 2px; width: 114px; height: 13px; padding: 0 2px; background: #eef0f1; }
.search input { flex: 1; min-width: 0; border: 0; padding: 0; background: none; font: inherit; font-size: 6px; color: #555; }
.search input::placeholder { color: #666b6e; opacity: 1; }
.search .q { width: 11px; height: 11px; }
.c { width: 4px; height: 3px; }
.window { padding: 0 0 2px 4px; }
.window .dd { width: 8px; }
.window .help { font-size: 11px; font-weight: bold; }

/* Configuration drop-down */
.config-row { display: flex; align-items: center; height: 19px; padding-left: 2px; border-bottom: 1px solid #b3b7ba; }
.config-row select { appearance: none; width: 119px; height: 14px; padding: 0 5px; border: 1px solid #b7bbbe; border-radius: 0; background: #e0e3e5; font: inherit; color: var(--ink); }
.chev { width: 6px; height: 4px; margin-left: -9px; pointer-events: none; }

/* Ribbon */
.ribbon { display: flex; height: 46px; }
.stack { display: flex; flex-direction: column; gap: 3px; width: 88px; padding: 2px 0 0 1px; }
.stack button { gap: 4px; height: 12px; justify-content: flex-start; white-space: nowrap; }
.stack svg { width: 11px; height: 11px; }
.big { flex-direction: column; justify-content: flex-start; width: 37px; padding-top: 8px; line-height: 7px; }
.big svg { width: 10px; height: 10px; margin-bottom: 2px; }

/* Command tabs */
.tabs { display: flex; height: 13px; background: #fff; border-top: 1px solid var(--line); }
.tabs a { padding: 0 4px 0 3px; line-height: 13px; white-space: nowrap; background: var(--grey); border-right: 1px solid #8c8f92; border-bottom: 1px solid #8c8f92; }
.tabs a:first-child { padding: 0 5px 0 2px; }
.tabs .on { background: var(--bg); border-bottom-color: var(--bg); }

/* Work area */
.work { flex: 1; min-height: 0; display: flex; }
.rail { width: 16px; padding-top: 7px; }
.rail button { width: 14px; height: 15px; }
.rail hr { margin: 1px 1px; border: 0; border-top: 1px solid var(--line); }
.panel { position: relative; z-index: 1; display: flex; flex-direction: column; width: 195px; border-right: 1px solid #85898c; }
.grab { display: flex; align-items: center; justify-content: center; height: 11px; margin-top: 1px; border: solid #8c9093; border-width: 1px 0; }
.grab i { width: 3px; height: 3px; border: 1px solid #85898c; }
.panel-tabs { display: flex; height: 14px; margin: 1px 0; padding-left: 1px; }
.panel-tabs button { width: 23px; background: var(--grey); border-right: 1px solid #96999c; }
.panel-tabs .on { background: none; border: 0; }
.panel-tabs .more { width: 12px; margin-left: auto; background: none; border: 0; }
.more svg { width: 4px; height: 8px; }
.filter { display: flex; align-items: center; height: 15px; padding-left: 0; margin: 0 2px; background: #f4f5f6; }
.filter input { flex: 1; min-width: 0; height: 12px; border: 0; background: none; font: inherit; }
.tree { display: grid; grid-template-rows: repeat(20, 1fr); height: 252px; margin: 0; padding: 0; list-style: none; overflow: hidden; }
.tree li { position: relative; display: flex; align-items: center; gap: 2px; padding-left: 14px; white-space: nowrap; overflow: hidden; min-height: 0; }
.tree .root { padding-left: 1px; margin-right: 1px; font-size: 6px; }
.tree svg { width: 11px; height: 11px; }
.tree .has::before { content: ""; position: absolute; left: 4px; border: 2px solid transparent; border-left: 3px solid #3c4043; border-right: 0; }
.tree .dim { color: #8c9194; }
.rollback { height: 3px; margin-right: 1px; background: #f0ab1e; border-bottom: 1px solid #4e3038; }
.hscroll { display: flex; align-items: center; gap: 4px; height: 10px; margin-top: auto; margin-bottom: 1px; padding: 0 2px; background: #f0f1f2; }
.hscroll svg { width: 4px; height: 8px; }
.track { flex: 1; height: 100%; }
.thumb { width: 70%; height: 100%; background: #c9cbcd; }
.splitter { position: absolute; right: -5px; top: 208px; width: 6px; height: 22px; background: #dcdfe1; border: 1px solid #b5b9bc; }

/* Graphics view */
.view { position: relative; flex: 1; min-width: 0; background: #fff; }
.model { width: 100%; height: 100%; }
.triad text { font-size: 5px; }
.hud { position: absolute; left: 234px; top: 2px; }
.hud .dd { width: 8px; opacity: .6; }
.hud svg { opacity: .85; }
.doc-ctl { position: absolute; right: 2px; top: -10px; color: #85898c; }
.doc-ctl svg { width: 11px; height: 11px; }
.task { position: absolute; right: 0; top: 17px; width: 12px; background: var(--grey); border-left: 1px solid #85898c; }
.task button { width: 100%; height: 14px; border-bottom: 1px solid #85898c; }
.task svg { width: 11px; height: 11px; }
.task .on { background: var(--bg); }

/* Footer */
.sheets { display: flex; height: 9px; padding-left: 32px; border-top: 1px solid var(--line); }
.sheets a { padding: 0 6px; background: var(--grey); white-space: nowrap; }
.sheets .on { background: none; font-weight: bold; }
.sheets .blank { width: 38px; }
.filters { display: flex; align-items: center; height: 19px; }
.group { display: flex; height: 16px; align-items: center; }
.group button { flex: 1; height: 14px; }
.group svg { width: 11px; height: 11px; }
.lead { width: 90px; margin: 0 1px 0 35px; }
.lead .pressed { background: #aeb2b5; border: 1px solid #85898c; }
.main { width: 377px; padding-right: 4px; border-right: 1px solid var(--line); }
.snapA { width: 103px; padding-left: 4px; margin-left: 3px; border-left: 1px dotted #85898c; border-right: 1px solid var(--line); }
.snapB { width: 132px; padding: 0 4px 0 3px; border-right: 1px solid var(--line); }
.status { display: flex; align-items: center; height: 9px; border-top: 1px solid #85898c; overflow: hidden; white-space: nowrap; }
.status .mode { margin-left: auto; }
.status .units { margin: 0 16px 0 38px; }
.status .tagi { width: 9px; height: 9px; margin-left: 36px; }

/* Recorder mark and pointer halo */
.watermark { position: absolute; left: 9px; bottom: 8px; color: #fff; font-weight: bold; text-shadow: 0 0 1px #333, 0 1px 1px #333, 1px 0 1px #333; pointer-events: none; }
.watermark span { display: flex; align-items: center; }
.big-mark { font-size: 10px; line-height: 16px; gap: 3px; }
.big-mark svg { width: 20px; height: 20px; margin: -2px 0; }
.pointer { position: absolute; z-index: 2; left: 22px; top: 79px; width: 44px; height: 44px; pointer-events: none; }
```
